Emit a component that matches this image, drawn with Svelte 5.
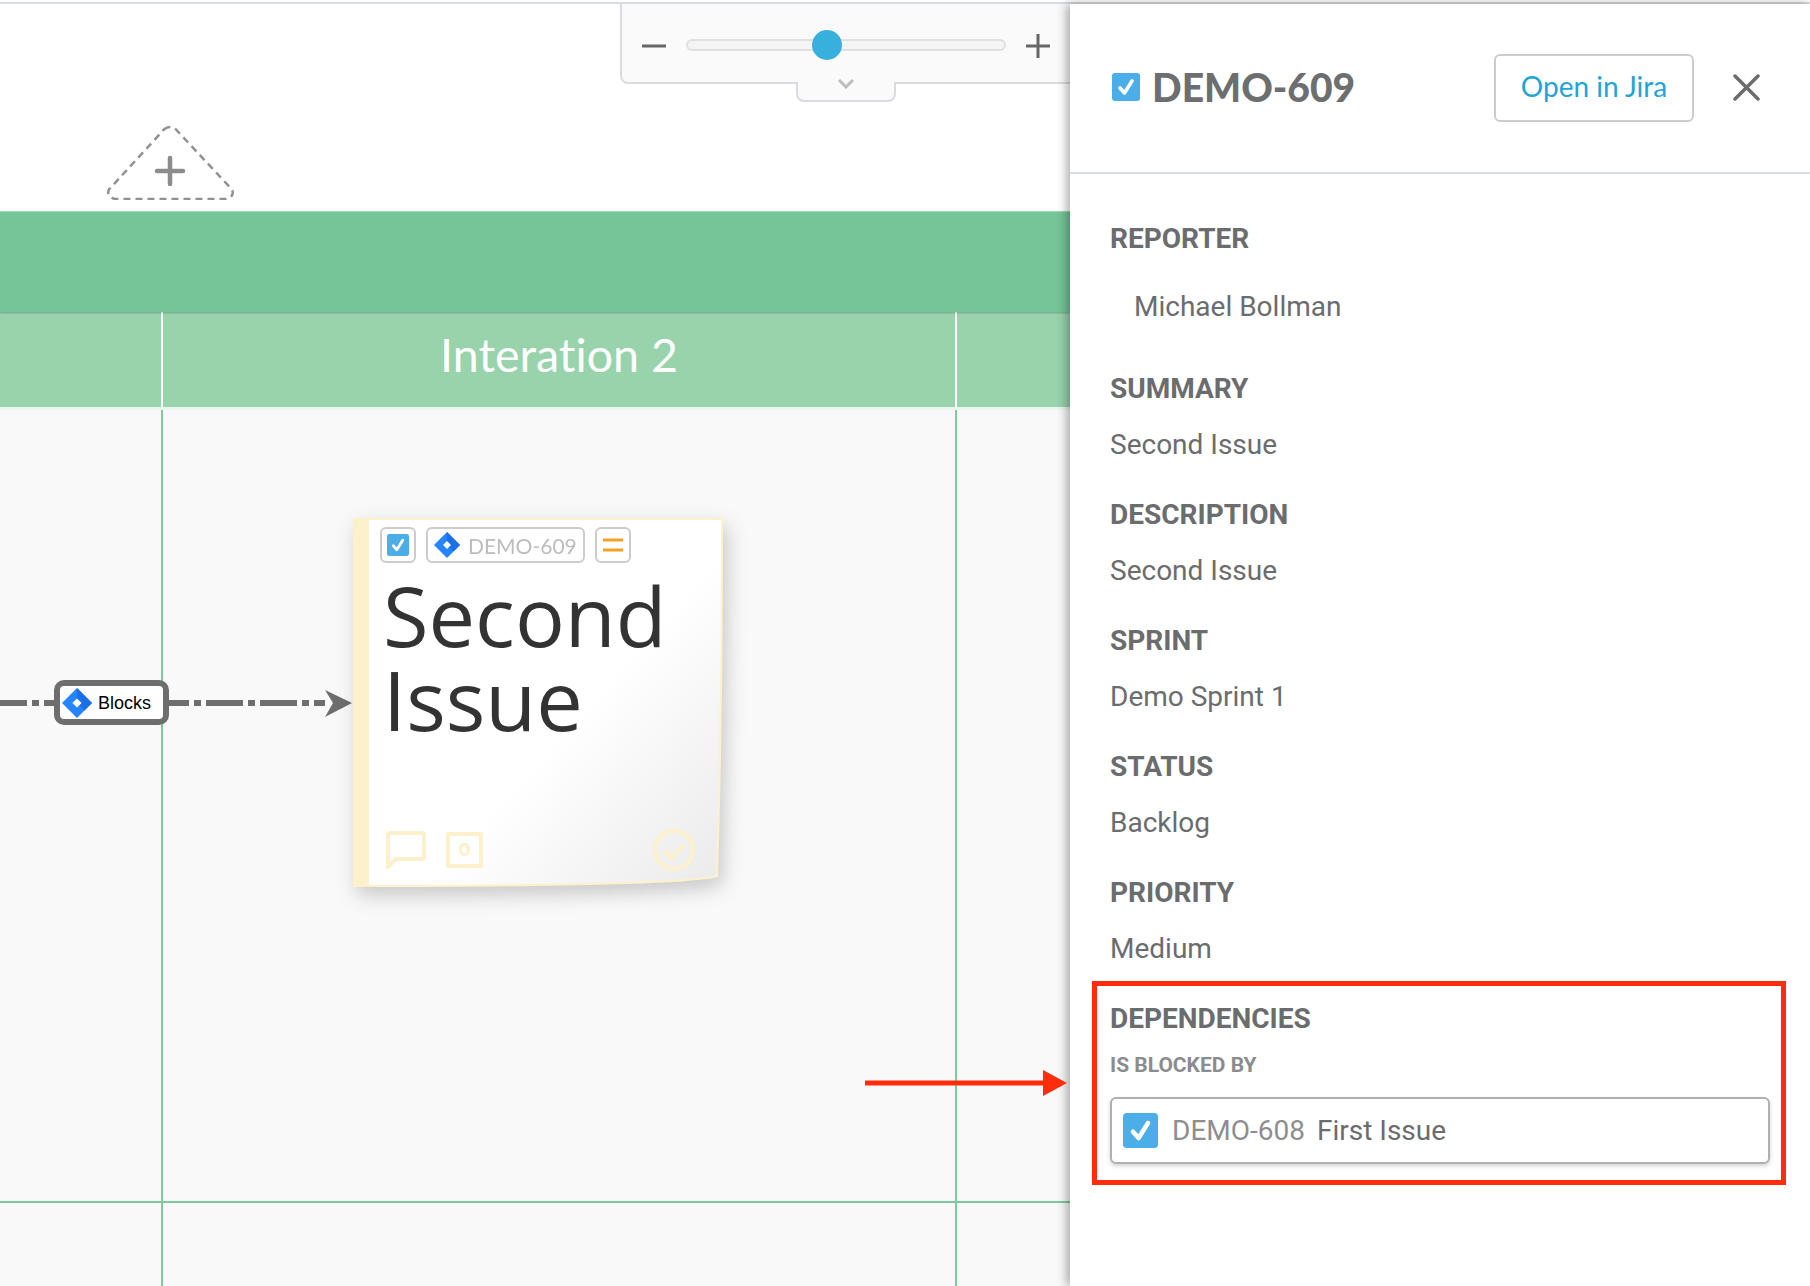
<script>
const fields = [
	{ label: "SUMMARY", value: "Second Issue" },
	{ label: "DESCRIPTION", value: "Second Issue" },
	{ label: "SPRINT", value: "Demo Sprint 1" },
	{ label: "STATUS", value: "Backlog" },
	{ label: "PRIORITY", value: "Medium" },
];
</script>

{#snippet checkbox(cls)}
	<svg class={cls} viewBox="0 0 28 28">
		<rect width="28" height="28" rx="3" fill="#4baee8" />
		<path d="M8 15l4.500 5L20 8" fill="none" stroke="#fff" stroke-width="3.600" stroke-linecap="round" stroke-linejoin="round" />
	</svg>
{/snippet}

{#snippet jira(cls)}
	<svg class={cls} viewBox="0 0 26 26">
		<path d="M13 0l13 13-13 13L0 13z" fill="#2684ff" />
		<path d="M13 0l13 13-6.500 6.500L13 13z" fill="#1a6fe8" />
		<path d="M13 9l4 4-4 4-4-4z" fill="#fff" />
	</svg>
{/snippet}

<div class="app">
	<div class="topline"></div>
	<div class="main">
		<div class="board">
			<div class="top"></div>
			<div class="band"></div>
			<div class="iterations">
				<div class="iter"></div>
				<div class="iter title">Interation 2</div>
				<div></div>
			</div>
			<div class="grid">
				<div class="cell"></div>
				<div class="cell"></div>
				<div class="cell last"></div>
				<div class="cell end"></div>
				<div class="cell end"></div>
				<div class="cell last end"></div>
			</div>

			<div class="zoom">
				<svg class="zoom-btn" viewBox="0 0 24 24"><path d="M0 12h24" /></svg>
				<div class="track"><div class="knob"></div></div>
				<svg class="zoom-btn" viewBox="0 0 24 24"><path d="M0 12h24M12 0v24" /></svg>
				<div class="zoom-tab">
					<svg viewBox="0 0 16 10" width="16" height="10"><path d="M1 1l7 7 7-7" /></svg>
				</div>
			</div>

			<svg class="add" viewBox="0 0 127 74" width="127" height="74">
				<path class="tri" d="M57 3.500q6-5 12 0l56 60q3 7-6 9.500H8q-9-2.500-6-9.500z" />
				<path class="plus" d="M50 45h26M63 32v26" />
			</svg>

			<svg class="link" viewBox="0 0 360 60" width="360" height="60">
				<path class="dash" d="M0 30h325" />
				<path class="head" d="M325 17l27 13-27 14 8-14z" />
			</svg>
			<div class="blocks">
				{@render jira("blocks-icon")}
				<span>Blocks</span>
			</div>

			<div class="sticky">
				<svg class="paper" viewBox="0 0 370 369" width="370" height="369">
					<defs>
						<linearGradient id="curl" x1="0.55" y1="0.6" x2="1" y2="1">
							<stop offset="0" stop-color="#fff" />
							<stop offset="1" stop-color="#eaeaea" />
						</linearGradient>
					</defs>
					<path d="M1 1H369Q369 200 364 358Q330 368 1 368z" fill="url(#curl)" stroke="#fdf1cb" stroke-width="2" />
					<path d="M0 0h16v369H0z" fill="#fdf1cb" />
				</svg>
				<div class="chips">
					<div class="chip square">{@render checkbox("chip-check")}</div>
					<div class="chip key">{@render jira("key-icon")}<span>DEMO-609</span></div>
					<div class="chip square">
						<svg class="bars" viewBox="0 0 20 14" width="20" height="14"><path d="M0 2h20M0 12h20" /></svg>
					</div>
				</div>
				<div class="sticky-text">Second Issue</div>
				<div class="sticky-foot">
					<svg viewBox="0 0 40 38" width="40" height="38"><path d="M2 36V4q0-2 2-2h32q2 0 2 2v22q0 2-2 2H10z" /></svg>
					<div class="points">0</div>
					<svg class="done" viewBox="0 0 42 42" width="42" height="42"><circle cx="21" cy="21" r="19" /><path d="M12 22l7 7 12-13" /></svg>
				</div>
			</div>
		</div>

		<aside class="panel">
			<header class="panel-head">
				{@render checkbox("head-check")}
				<h1>DEMO-609</h1>
				<button class="open">Open in Jira</button>
				<svg class="close" viewBox="0 0 27 27" width="27" height="27"><path d="M2 2l23 23M25 2L2 25" /></svg>
			</header>
			<div class="panel-body">
				<div class="reporter">
					<div class="label">REPORTER</div>
					<div class="value indent">Michael Bollman</div>
				</div>
				{#each fields as f}
					<div class="field">
						<div class="label">{f.label}</div>
						<div class="value">{f.value}</div>
					</div>
				{/each}
				<div class="deps">
					<div class="label">DEPENDENCIES</div>
					<div class="sublabel">IS BLOCKED BY</div>
					<div class="issue">
						{@render checkbox("issue-check")}
						<span class="issue-key">DEMO-608</span>
						<span>First Issue</span>
					</div>
				</div>
			</div>
		</aside>

		<svg class="red-arrow" viewBox="0 0 202 26" width="202" height="26">
			<path d="M0 13h180" />
			<path class="tip" d="M178 0l24 13-24 13z" />
		</svg>
	</div>
</div>

<style>
	:global(body) {
		margin: 0;
		background: #fff;
		overflow: hidden;
	}
	.app {
		width: 1810px;
		height: 1286px;
		padding-top: 2px;
		box-sizing: border-box;
		display: flex;
		flex-direction: column;
		font-family: Roboto, sans-serif;
		color: #6b6c6e;
	}
	.topline {
		height: 2px;
		background: #d8dde2;
		flex: none;
	}
	.main {
		flex: 1;
		display: flex;
		position: relative;
		min-height: 0;
	}
	.board {
		width: 1070px;
		flex: none;
		display: flex;
		flex-direction: column;
		position: relative;
		overflow: hidden;
	}
	.top {
		height: 207px;
		flex: none;
	}
	.band {
		height: 101px;
		flex: none;
		background: #75c598;
		border-top: 1px solid #a4d9b9;
		box-sizing: border-box;
		box-shadow: 0 1px 2px rgba(0, 0, 0, 0.25);
		position: relative;
	}
	.iterations {
		height: 95px;
		flex: none;
		display: grid;
		grid-template-columns: 163px 794px 1fr;
		background: #98d3ac;
	}
	.iter {
		border-right: 2px solid #fff;
	}
	.title {
		display: flex;
		align-items: center;
		justify-content: center;
		color: #fff;
		font: 400 46.500px Lato, sans-serif;
		font-variant-ligatures: none;
		padding-bottom: 12px;
	}
	.grid {
		flex: 1;
		display: grid;
		grid-template-columns: 163px 794px 1fr;
		grid-template-rows: 793px 1fr;
		background: #f9f9f9;
		border-top: 3px solid #eaf6ee;
	}
	.cell {
		border-right: 2px solid #7ccb9a;
		border-bottom: 2px solid #7ccb9a;
	}
	.cell.last {
		border-right: 0;
	}
	.cell.end {
		border-bottom: 0;
	}
	.zoom {
		position: absolute;
		left: 620px;
		top: 0;
		width: 470px;
		height: 80px;
		box-sizing: border-box;
		background: #fafafa;
		border: 2px solid #d8dce0;
		border-top: 0;
		border-radius: 0 0 8px 8px;
		display: flex;
		align-items: center;
		padding: 3px 0 0 20px;
	}
	.zoom-btn {
		width: 24px;
		height: 24px;
		flex: none;
		margin-top: 2px;
	}
	.zoom-btn path {
		stroke: #666;
		stroke-width: 3;
		fill: none;
	}
	.track {
		width: 320px;
		height: 12px;
		box-sizing: border-box;
		background: #f4f4f4;
		border: 2px solid #e0e0e0;
		border-radius: 6px;
		margin: 0 20px;
		position: relative;
		flex: none;
	}
	.knob {
		position: absolute;
		left: 124px;
		top: -11px;
		width: 30px;
		height: 30px;
		border-radius: 50%;
		background: #38b0de;
	}
	.zoom-tab {
		position: absolute;
		left: 174px;
		top: 78px;
		width: 100px;
		height: 20px;
		box-sizing: border-box;
		background: #fafafa;
		border: 2px solid #d8dce0;
		border-top: 0;
		border-radius: 0 0 8px 8px;
		display: flex;
		justify-content: center;
	}
	.zoom-tab svg {
		margin-top: -3px;
	}
	.zoom-tab path {
		fill: none;
		stroke: #bdbdbd;
		stroke-width: 3;
	}
	.add {
		position: absolute;
		left: 107px;
		top: 122px;
	}
	.tri {
		fill: none;
		stroke: #8f9193;
		stroke-width: 2.500;
		stroke-dasharray: 7 5;
	}
	.plus {
		fill: none;
		stroke: #8a8c8e;
		stroke-width: 4.500;
		stroke-linecap: round;
	}
	.link {
		position: absolute;
		left: 0;
		top: 669px;
	}
	.dash {
		fill: none;
		stroke: #6e6e6e;
		stroke-width: 6;
		stroke-dasharray: 37 5 7 5;
		stroke-dashoffset: 10;
	}
	.head {
		fill: #6e6e6e;
	}
	.blocks {
		position: absolute;
		left: 54px;
		top: 676px;
		width: 115px;
		height: 45px;
		box-sizing: border-box;
		background: #fff;
		border: 6px solid #6e6e6e;
		border-radius: 10px;
		display: flex;
		align-items: center;
		gap: 6px;
		padding: 1px 0 0 2px;
		color: #000;
		font: 18px "Liberation Sans", sans-serif;
	}
	:global(.blocks-icon) {
		width: 30px;
		height: 30px;
		flex: none;
	}
	.sticky {
		position: absolute;
		left: 353px;
		top: 514px;
		width: 370px;
		height: 369px;
		filter: drop-shadow(4px 8px 10px rgba(0, 0, 0, 0.2));
	}
	.paper {
		position: absolute;
		left: 0;
		top: 0;
	}
	.chips {
		position: absolute;
		left: 27px;
		top: 9px;
		display: flex;
		gap: 10px;
	}
	.chip {
		height: 36px;
		box-sizing: border-box;
		border: 2px solid #ccc;
		border-radius: 6px;
		display: flex;
		align-items: center;
		justify-content: center;
		color: #bdbdbd;
		font: 21px Lato, sans-serif;
		white-space: nowrap;
	}
	.chip.square {
		width: 36px;
	}
	.bars path {
		stroke: #f9a11f;
		stroke-width: 3;
		fill: none;
	}
	.chip.key {
		width: 159px;
		gap: 8px;
		padding-left: 6px;
		justify-content: flex-start;
	}
	:global(.chip-check) {
		width: 22px;
		height: 22px;
	}
	:global(.key-icon) {
		width: 26px;
		height: 26px;
		flex: none;
	}
	.sticky-text {
		position: absolute;
		left: 30px;
		top: 55px;
		width: 320px;
		color: #333;
		font: 83px/84px "Open Sans", sans-serif;
	}
	.sticky-foot {
		position: absolute;
		left: 33px;
		top: 311px;
		width: 309px;
		display: flex;
		align-items: center;
		gap: 20px;
	}
	.sticky-foot path,
	.sticky-foot circle {
		fill: none;
		stroke: #fdf1cb;
		stroke-width: 4;
	}
	.points {
		width: 37px;
		height: 36px;
		box-sizing: border-box;
		border: 4px solid #fdf1cb;
		border-radius: 2px;
		color: #fdf1cb;
		font: 800 18px/28px Inter, sans-serif;
		text-align: center;
	}
	.done {
		margin-left: auto;
	}
	.panel {
		flex: 1;
		background: #fff;
		box-shadow: -3px 0 10px rgba(0, 0, 0, 0.35);
		position: relative;
		min-width: 0;
	}
	.panel-head {
		height: 170px;
		box-sizing: border-box;
		border-bottom: 2px solid #d8dde2;
		display: flex;
		align-items: center;
		padding: 0 50px 1px 42px;
	}
	:global(.head-check) {
		width: 28px;
		height: 28px;
		flex: none;
		margin-bottom: 2px;
	}
	h1 {
		margin: 0 0 2px 12px;
		font: 900 39px Lato, sans-serif;
		color: #6d6e70;
		flex: 1;
	}
	.open {
		width: 200px;
		height: 68px;
		box-sizing: border-box;
		background: #fff;
		border: 2px solid #ccc;
		border-radius: 6px;
		color: #1ea5d8;
		font: 28px Lato, sans-serif;
		padding: 0 0 3px;
	}
	.close {
		margin-left: 39px;
	}
	.close path {
		fill: none;
		stroke: #6b6b6b;
		stroke-width: 3.500;
		stroke-linecap: round;
	}
	.panel-body {
		padding: 50px 24px 0 40px;
		display: flex;
		flex-direction: column;
	}
	.label {
		font-weight: 700;
		font-size: 28px;
		line-height: 30px;
	}
	.value {
		font-size: 28px;
		line-height: 30px;
		margin-top: 26px;
	}
	.reporter .value {
		margin-top: 38px;
	}
	.indent {
		padding-left: 24px;
	}
	.field {
		margin-top: 40px;
	}
	.reporter + .field {
		margin-top: 52px;
	}
	.deps {
		margin: 17px 0 0 -18px;
		border: 5px solid #ff2d0b;
		padding: 18px 11px 16px 13px;
	}
	.sublabel {
		margin-top: 18px;
		font-weight: 700;
		font-size: 21px;
		line-height: 26px;
		color: #8a8c8e;
	}
	.issue {
		margin-top: 19px;
		height: 67px;
		box-sizing: border-box;
		border: 2px solid #b0b0b0;
		border-radius: 6px;
		box-shadow: 0 2px 4px rgba(0, 0, 0, 0.18);
		display: flex;
		align-items: center;
		padding-left: 11px;
		font-size: 28px;
		gap: 12px;
	}
	:global(.issue-check) {
		width: 35px;
		height: 35px;
		flex: none;
		margin-right: 2px;
	}
	.issue-key {
		color: #8e8e8e;
	}
	.red-arrow {
		position: absolute;
		left: 865px;
		top: 1066px;
	}
	.red-arrow path {
		fill: none;
		stroke: #ff2d0b;
		stroke-width: 5;
	}
	.red-arrow .tip {
		fill: #ff2d0b;
		stroke: none;
	}
</style>
